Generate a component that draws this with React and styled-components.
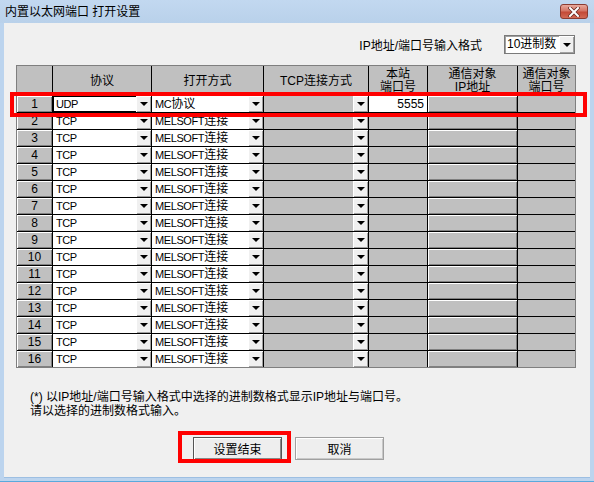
import React from "react";
import styled, { createGlobalStyle } from "styled-components";

const GlobalStyle = createGlobalStyle`
  body {
    margin: 0;
    font-family: "Liberation Sans", "Noto Sans CJK SC", sans-serif;
    font-size: 12px;
    color: #000;
  }
`;

const Window = styled.div`
  width: 594px;
  height: 482px;
  box-sizing: border-box;
  background: #bcd4ee;
  display: flex;
  flex-direction: column;
  border-bottom: 1px solid #5aa9dc;
`;

const TitleBar = styled.div`
  height: 23px;
  flex-shrink: 0;
  display: flex;
  align-items: center;
  justify-content: space-between;
  padding: 0 6px 0 5px;
  background: linear-gradient(#c2d8f0, #b9d1ea);
`;

const Title = styled.span`
  font-size: 12px;
  line-height: 14px;
`;

const CloseButton = styled.div`
  width: 28px;
  height: 15px;
  box-sizing: border-box;
  border: 1px solid #8a3b31;
  border-radius: 3px;
  background: linear-gradient(#e9a99c, #d47565 45%, #c44a37 55%, #d26a55);
  display: flex;
  align-items: center;
  justify-content: center;
`;

const Body = styled.div`
  flex: 1;
  margin: 0 4px 3px 4px;
  background: #f0f0f0;
  padding: 12px 15px 0 12px;
  border-bottom: 1px solid #9dbfe2;
`;

const FormatRow = styled.div`
  display: flex;
  justify-content: flex-end;
  align-items: center;
  gap: 22px;
  height: 19px;
`;

const Select = styled.div`
  width: 71px;
  height: 19px;
  box-sizing: border-box;
  border: 1px solid #7a7a7a;
  box-shadow: inset 1px 1px #a0a0a0;
  background: #fff;
  display: flex;
  align-items: stretch;
`;

const SelectText = styled.span`
  flex: 1;
  padding-left: 2px;
  line-height: 17px;
`;

const TableWrap = styled.div`
  position: relative;
  margin-top: 11px;
  width: 560px;
`;

const Grid = styled.div`
  display: grid;
  grid-template-columns: 35px 98px 111px 104px 58px 89px 57px;
  grid-template-rows: 29px repeat(16, 16px);
  gap: 1px;
  background: #000;
  border: 1px solid #7f7f7f;
`;

const HeadCell = styled.div`
  background: #c0c0c0;
  display: flex;
  flex-direction: column;
  align-items: center;
  justify-content: center;
  line-height: 13px;
  padding-top: 1px;
  overflow: hidden;
  white-space: nowrap;
`;

const NumCell = styled.div`
  background: #c0c0c0;
  box-shadow: inset 1px 1px #fff, inset -1px -1px #808080;
  text-align: center;
  line-height: 16px;
`;

const ComboCell = styled.div`
  background: ${(p) => (p.$white ? "#fff" : "#c0c0c0")};
  box-shadow: ${(p) => (p.$focus ? "inset 0 0 0 1px #000" : "none")};
  display: flex;
  align-items: stretch;
  overflow: hidden;
`;

const ComboText = styled.span`
  flex: 1;
  padding-left: 3px;
  line-height: 16px;
  white-space: nowrap;
`;

const Latin = styled.span`
  font-size: 11px;
  letter-spacing: -0.4px;
`;

const DropButton = styled.div`
  width: 15px;
  flex-shrink: 0;
  background: #f0f0f0;
  box-shadow: inset 1px 1px #fff, inset -1px -1px #a0a0a0;
  display: flex;
  align-items: center;
  justify-content: center;
  &::after {
    content: "";
    border-left: 4px solid transparent;
    border-right: 4px solid transparent;
    border-top: 4px solid #000;
  }
`;

const PortCell = styled.div`
  background: ${(p) => (p.$white ? "#fff" : "#c0c0c0")};
  text-align: right;
  padding-right: 3px;
  line-height: 16px;
`;

const IpCell = styled.div`
  background: #c0c0c0;
  box-shadow: inset 1px 1px #fff, inset -1px -1px #808080;
`;

const PlainCell = styled.div`
  background: #c0c0c0;
`;

const RowHighlight = styled.div`
  position: absolute;
  top: 27px;
  left: -6px;
  width: 577px;
  height: 25px;
  box-sizing: border-box;
  border: 4px solid #f00;
  pointer-events: none;
`;

const Note = styled.div`
  margin-top: 22px;
  padding-left: 14px;
  line-height: 14px;
`;

const ButtonRow = styled.div`
  display: flex;
  gap: 13px;
  margin-top: 19px;
  padding-left: 177px;
`;

const ButtonBox = styled.div`
  position: relative;
  &::after {
    content: "";
    display: ${(p) => (p.$marked ? "block" : "none")};
    position: absolute;
    top: -6px;
    left: -15px;
    right: -9px;
    bottom: -3px;
    border: 4px solid #f00;
  }
`;

const Button = styled.div`
  width: 89px;
  height: 23px;
  box-sizing: border-box;
  border: 1px solid ${(p) => (p.$default ? "#555" : "#a0a0a0")};
  box-shadow: inset 1px 1px #fff, inset -1px -1px ${(p) => (p.$default ? "#888" : "#c8c8c8")};
  background: #eeeeee;
  display: flex;
  align-items: center;
  justify-content: center;
  font-size: 12px;
`;

const rows = Array.from({ length: 16 }, (_, i) => ({
  no: i + 1,
  proto: i === 0 ? "UDP" : "TCP",
  modeLatin: i === 0 ? "MC" : "MELSOFT",
  mode: i === 0 ? "协议" : "连接",
  port: i === 0 ? "5555" : "",
}));

function CloseIcon() {
  return (
    <svg width="12" height="10" viewBox="0 0 12 10">
      <path d="M2 1 L10 9 M10 1 L2 9" stroke="#6b2a22" strokeWidth="3.6" strokeLinecap="square" />
      <path d="M2 1 L10 9 M10 1 L2 9" stroke="#fff" strokeWidth="2" strokeLinecap="square" />
    </svg>
  );
}

export default function App() {
  return (
    <>
      <GlobalStyle />
      <Window>
        <TitleBar>
          <Title>内置以太网端口 打开设置</Title>
          <CloseButton>
            <CloseIcon />
          </CloseButton>
        </TitleBar>
        <Body>
          <FormatRow>
            <span>IP地址/端口号输入格式</span>
            <Select>
              <SelectText>10进制数</SelectText>
              <DropButton />
            </Select>
          </FormatRow>
          <TableWrap>
            <Grid>
              <HeadCell />
              <HeadCell>协议</HeadCell>
              <HeadCell>打开方式</HeadCell>
              <HeadCell>TCP连接方式</HeadCell>
              <HeadCell>
                <span>本站</span>
                <span>端口号</span>
              </HeadCell>
              <HeadCell>
                <span>通信对象</span>
                <span>IP地址</span>
              </HeadCell>
              <HeadCell>
                <span>通信对象</span>
                <span>端口号</span>
              </HeadCell>
              {rows.map((r) => (
                <React.Fragment key={r.no}>
                  <NumCell>{r.no}</NumCell>
                  <ComboCell $white $focus={r.no === 1}>
                    <ComboText>
                      <Latin>{r.proto}</Latin>
                    </ComboText>
                    <DropButton />
                  </ComboCell>
                  <ComboCell $white>
                    <ComboText>
                      <Latin>{r.modeLatin}</Latin>
                      {r.mode}
                    </ComboText>
                    <DropButton />
                  </ComboCell>
                  <ComboCell>
                    <ComboText />
                    <DropButton />
                  </ComboCell>
                  <PortCell $white={r.no === 1}>{r.port}</PortCell>
                  <IpCell />
                  <PlainCell />
                </React.Fragment>
              ))}
            </Grid>
            <RowHighlight />
          </TableWrap>
          <Note>
            (*) 以IP地址/端口号输入格式中选择的进制数格式显示IP地址与端口号。
            <br />
            请以选择的进制数格式输入。
          </Note>
          <ButtonRow>
            <ButtonBox $marked>
              <Button $default>设置结束</Button>
            </ButtonBox>
            <ButtonBox>
              <Button>取消</Button>
            </ButtonBox>
          </ButtonRow>
        </Body>
      </Window>
    </>
  );
}
